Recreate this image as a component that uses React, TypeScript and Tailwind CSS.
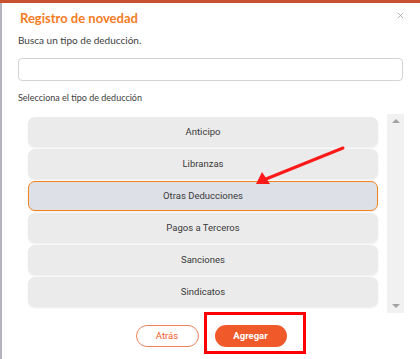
import { X } from "lucide-react";

const opciones = [
  "Anticipo",
  "Libranzas",
  "Otras Deducciones",
  "Pagos a Terceros",
  "Sanciones",
  "Sindicatos",
];

export default function App() {
  const seleccion = "Otras Deducciones";

  return (
    <div className="relative w-[420px] h-[359px] overflow-hidden bg-white font-['Lato',sans-serif]">
      {/* barra de la página detrás */}
      <div className="h-[3px] bg-[#c8502e]" />
      <div className="flex h-[356px]">
        <div className="w-[2px] bg-[#b3b3c2]" />

        {/* MODAL */}
        <div className="relative flex-1 flex flex-col pl-[16px] pr-[16px] pt-[7px]">
          <button className="absolute right-[15px] top-[8px] text-[#9a9a9a]">
            <X size={9} strokeWidth={2} />
          </button>

          <h2 className="pl-[2px] text-[13px] leading-[16px] font-bold text-[#f57c1f]">
            Registro de novedad
          </h2>

          <p className="mt-[8px] text-[10px] leading-[12px] text-[#3d3d3d]">
            Busca un tipo de deducción.
          </p>

          <input
            className="mt-[12px] h-[23px] w-[385px] rounded-[4px] border border-[#d3d3d3] outline-none"
            type="text"
          />

          <p className="mt-[11px] text-[9px] leading-[12px] text-[#3d3d3d]">
            Selecciona el tipo de deducción
          </p>

          {/* LISTA */}
          <div className="mt-[10px] flex h-[199px] w-[386px]">
            <div className="flex-1 flex flex-col gap-[2px] pt-[3px] pl-[10px] pr-[9px]">
              {opciones.map((o) => (
                <div
                  key={o}
                  className={`h-[30px] shrink-0 rounded-[7px] flex items-center justify-center text-[9.5px] text-[#3a3a3a] font-['Roboto',sans-serif] shadow-[0_1px_2px_rgba(0,0,0,0.08)] ${
                    o === seleccion
                      ? "bg-[#dee0e8] border border-[#f5821f]"
                      : "bg-[#ebebeb]"
                  }`}
                >
                  {o}
                </div>
              ))}
            </div>

            {/* SCROLLBAR */}
            <div className="w-[17px] bg-[#f1f1f1] flex flex-col justify-between items-center py-[5px]">
              <div className="w-0 h-0 border-l-[4px] border-r-[4px] border-b-[4px] border-l-transparent border-r-transparent border-b-[#a3a3a3]" />
              <div className="w-0 h-0 border-l-[4px] border-r-[4px] border-t-[4px] border-l-transparent border-r-transparent border-t-[#a3a3a3]" />
            </div>
          </div>

          {/* BOTONES */}
          <div className="mt-[12px] flex justify-center gap-[16px]">
            <button className="h-[22px] w-[63px] rounded-full border border-[#f0825d] text-[9.5px] text-[#f05a2b] font-['Roboto',sans-serif]">
              Atrás
            </button>
            <button className="h-[22px] w-[72px] rounded-full bg-[#f05a2b] text-[9.5px] font-bold text-white font-['Roboto',sans-serif]">
              Agregar
            </button>
          </div>
        </div>
      </div>

      {/* ANOTACIONES */}
      <div className="absolute left-[204px] top-[312px] w-[102px] h-[42px] border-[3px] border-[#ff0000]" />
      <svg
        className="absolute left-0 top-0"
        width="420"
        height="359"
        viewBox="0 0 420 359"
      >
        <line x1="343" y1="148" x2="266" y2="179" stroke="#ff1a1a" strokeWidth="3" strokeLinecap="round" />
        <polygon points="256,184 262,172 270,184" fill="#ff1a1a" />
      </svg>
    </div>
  );
}
